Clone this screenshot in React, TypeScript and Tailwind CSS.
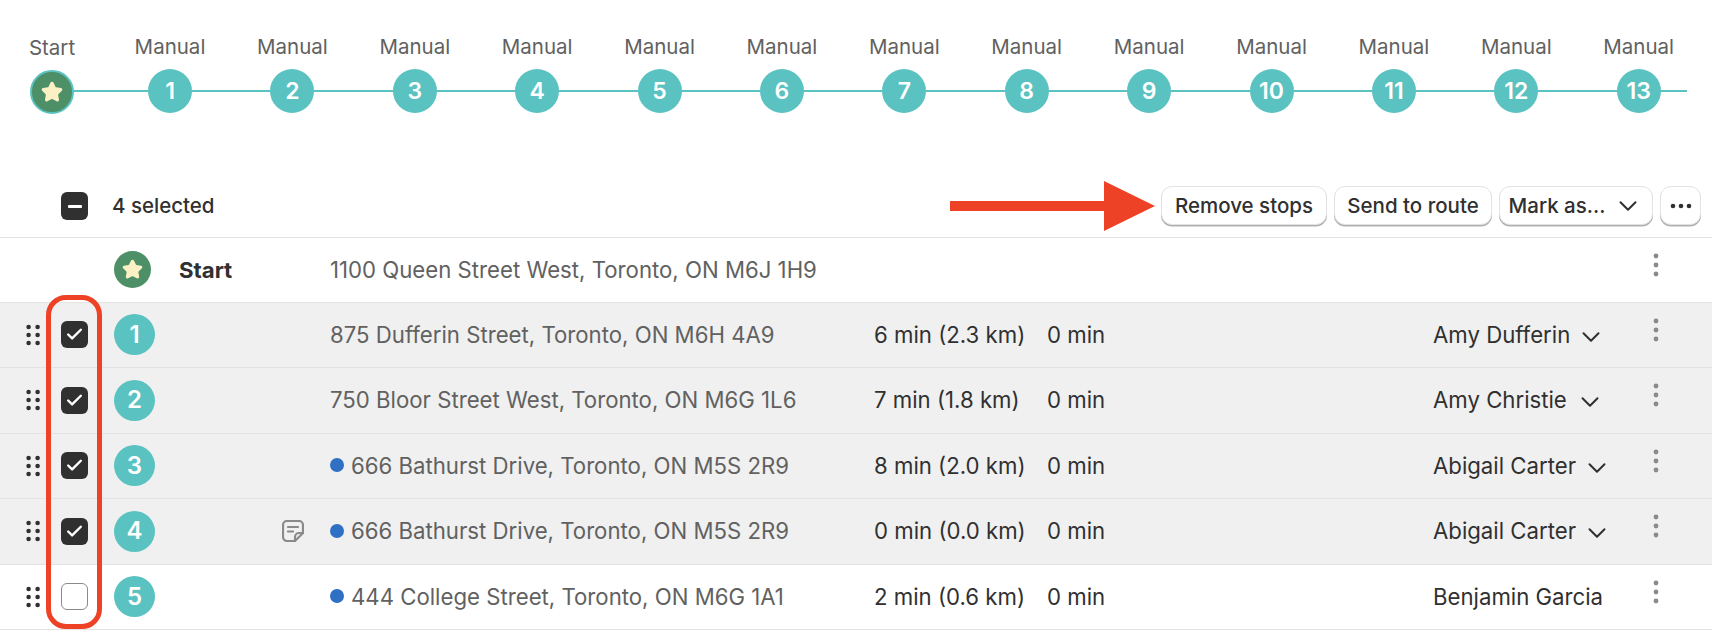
import { ChevronDown, Star, Check } from "lucide-react";

const TEAL = "bg-[#5ac2c0]";

function StarIcon({ size }: { size: number }) {
  return <Star size={size} fill="#fbf1c4" color="#fbf1c4" strokeWidth={2.5} strokeLinejoin="round" />;
}

function StepCircle({ n }: { n: number }) {
  return (
    <div className={`w-[44px] h-[44px] shrink-0 rounded-full ${TEAL} text-white flex items-center justify-center text-[23px] font-semibold`}>
      {n}
    </div>
  );
}

function Kebab() {
  return (
    <svg width="6" height="24" viewBox="0 0 6 24" className="block">
      <circle cx="3" cy="3" r="2.4" fill="#8a8a8a" />
      <circle cx="3" cy="12" r="2.4" fill="#8a8a8a" />
      <circle cx="3" cy="21" r="2.4" fill="#8a8a8a" />
    </svg>
  );
}

function Grip() {
  return (
    <svg width="14" height="22" viewBox="0 0 14 22" className="block">
      {[3, 11, 19].map((y) => (
        <g key={y}>
          <circle cx="2.6" cy={y} r="2.3" fill="#303030" />
          <circle cx="11.6" cy={y} r="2.3" fill="#303030" />
        </g>
      ))}
    </svg>
  );
}

function NoteIcon() {
  return (
    <svg width="22" height="22" viewBox="0 0 22 22" fill="none" stroke="#8a8a8a" strokeWidth="2.2" strokeLinecap="round" strokeLinejoin="round" className="block">
      <path d="M13 21H5a4 4 0 0 1-4-4V5a4 4 0 0 1 4-4h12a4 4 0 0 1 4 4v8l-8 8Z" />
      <path d="M13 21v-4a4 4 0 0 1 4-4h4" />
      <path d="M6 7h10" />
      <path d="M6 11.500h5" />
    </svg>
  );
}

function Checkbox({ checked }: { checked: boolean }) {
  if (!checked) {
    return <div className="w-[27px] h-[27px] rounded-[6px] bg-white border border-[#8a8a8a]" />;
  }
  return (
    <div className="w-[27px] h-[27px] rounded-[6px] bg-[#303030] flex items-center justify-center">
      <Check size={19} color="#ffffff" strokeWidth={3} />
    </div>
  );
}

function Button({ children, className = "" }: { children: React.ReactNode; className?: string }) {
  return (
    <button className={`h-[39px] pt-[1px] rounded-[11px] bg-white border border-[#e3e3e3] shadow-[0_1.5px_0_#b0b0b0] text-[#303030] text-[20.500px] font-medium flex items-center justify-center ${className}`}>
      {children}
    </button>
  );
}

const rows = [
  { n: 1, addr: "875 Dufferin Street, Toronto, ON M6H 4A9", dot: false, note: false, time: "6 min (2.3 km)", name: "Amy Dufferin", gap: "ml-[6px]", checked: true, bg: "bg-[#f0f0f0]" },
  { n: 2, addr: "750 Bloor Street West, Toronto, ON M6G 1L6", dot: false, note: false, time: "7 min (1.8 km)", name: "Amy Christie", gap: "ml-[8px]", checked: true, bg: "bg-[#f0f0f0]" },
  { n: 3, addr: "666 Bathurst Drive, Toronto, ON M5S 2R9", dot: true, note: false, time: "8 min (2.0 km)", name: "Abigail Carter", gap: "ml-[6px]", checked: true, bg: "bg-[#f0f0f0]" },
  { n: 4, addr: "666 Bathurst Drive, Toronto, ON M5S 2R9", dot: true, note: true, time: "0 min (0.0 km)", name: "Abigail Carter", gap: "ml-[6px]", checked: true, bg: "bg-[#f0f0f0]" },
  { n: 5, addr: "444 College Street, Toronto, ON M6G 1A1", dot: true, note: false, time: "2 min (0.6 km)", name: "Benjamin Garcia", gap: "", checked: false, bg: "bg-white" },
];

export default function App() {
  const steps = Array.from({ length: 13 }, (_, i) => i + 1);
  return (
    <div className="relative w-[1712px] h-[632px] overflow-hidden bg-white font-['Inter',sans-serif] text-[#303030]">
      {/* Stepper */}
      <div className="h-[132px] pt-[35px]">
        <div className="flex items-start h-[33px] text-[20.500px] leading-[24px] text-[#616161]">
          <div className="w-[104px] mr-[4.800px] mt-[1px] text-center">Start</div>
          {steps.map((s) => (
            <div key={s} className="w-[122.400px] shrink-0 text-center">Manual</div>
          ))}
        </div>
        <div className="flex items-center ml-[30px] w-[1657px]">
          <div className="w-[44px] h-[44px] shrink-0 mt-[2px] rounded-full bg-[#4d8f66] border-2 border-[#5ac2c0] flex items-center justify-center">
            <StarIcon size={22} />
          </div>
          <div className={`w-[74px] h-[1.500px] shrink-0 ${TEAL}`} />
          {steps.map((s) => (
            <div key={s} className="flex items-center shrink-0">
              <StepCircle n={s} />
              {s < 13 ? (
                <div className={`w-[78.400px] h-[1.500px] ${TEAL}`} />
              ) : (
                <div className={`w-[26px] h-[1.500px] ${TEAL}`} />
              )}
            </div>
          ))}
        </div>
      </div>

      {/* Toolbar */}
      <div className="h-[106px] pt-[54px] border-b border-[#e3e3e3] flex items-start">
        <div className="ml-[61px] mt-[6px] w-[27px] h-[28px] rounded-[6px] bg-[#303030] flex items-center justify-center">
          <div className="w-[14px] h-[3px] bg-white rounded-[1px]" />
        </div>
        <div className="ml-[24px] mt-[8px] text-[20.500px] leading-[24px] font-medium">4 selected</div>
        <div className="ml-auto flex items-start mr-[11px] gap-[7px]">
          <svg width="205" height="50" viewBox="0 0 205 50" className="block mt-[-5px] -mr-[1px]">
            <path d="M0 20H154V0L205 25L154 50V30H0Z" fill="#ee4226" />
          </svg>
          <Button className="w-[166px]">Remove stops</Button>
          <Button className="w-[158px]">Send to route</Button>
          <Button className="w-[154px] gap-[8px]">
            Mark as...
            <ChevronDown size={30} color="#303030" strokeWidth={1.6} />
          </Button>
          <Button className="w-[41px]">
            <svg width="22" height="6" viewBox="0 0 22 6" className="block">
              <circle cx="3" cy="3" r="2.300" fill="#303030" />
              <circle cx="11" cy="3" r="2.300" fill="#303030" />
              <circle cx="19" cy="3" r="2.300" fill="#303030" />
            </svg>
          </Button>
        </div>
      </div>

      {/* Start row */}
      <div className="h-[64.500px] border-b border-[#e3e3e3] flex items-center text-[22.200px]">
        <div className="ml-[114px] w-[65px] shrink-0">
          <div className="w-[37px] h-[37px] rounded-full bg-[#4d8f66] flex items-center justify-center">
            <StarIcon size={21} />
          </div>
        </div>
        <div className="w-[151px] shrink-0 font-bold text-[#303030]">Start</div>
        <div className="text-[#616161] w-[1323px] shrink-0">1100 Queen Street West, Toronto, ON M6J 1H9</div>
        <div className="-mt-[10px]"><Kebab /></div>
      </div>

      {/* Stops */}
      {rows.map((r) => (
        <div key={r.n} className={`h-[65.500px] border-b border-[#e3e3e3] flex items-center text-[22.200px] ${r.bg}`}>
          <div className="ml-[26px] w-[35px] shrink-0"><Grip /></div>
          <div className="w-[53px] shrink-0"><Checkbox checked={r.checked} /></div>
          <div className={`w-[41px] h-[41px] shrink-0 rounded-full ${TEAL} text-white flex items-center justify-center text-[24px] font-semibold`}>{r.n}</div>
          <div className="w-[175px] shrink-0 flex justify-end pr-[26px]">{r.note && <NoteIcon />}</div>
          <div className="w-[544px] shrink-0 flex items-center text-[#616161] -mt-[1px]">
            {r.dot && <span className="w-[14px] h-[14px] rounded-full bg-[#2f6fc4] mr-[7px] shrink-0" />}
            {r.addr}
          </div>
          <div className="w-[173px] shrink-0 -mt-[1px]">{r.time}</div>
          <div className="w-[386px] shrink-0 -mt-[1px]">0 min</div>
          <div className="w-[220px] shrink-0 flex items-center -mt-[1px]">
            {r.name}
            {r.gap && <ChevronDown size={30} color="#303030" strokeWidth={1.6} className={`${r.gap} mt-[5px]`} />}
          </div>
          <div className="-mt-[10px]"><Kebab /></div>
        </div>
      ))}

      {/* Highlight annotation */}
      <div className="absolute left-[46px] top-[295px] w-[56px] h-[334px] rounded-[20px] border-[5px] border-[#ee4226]" />
    </div>
  );
}
